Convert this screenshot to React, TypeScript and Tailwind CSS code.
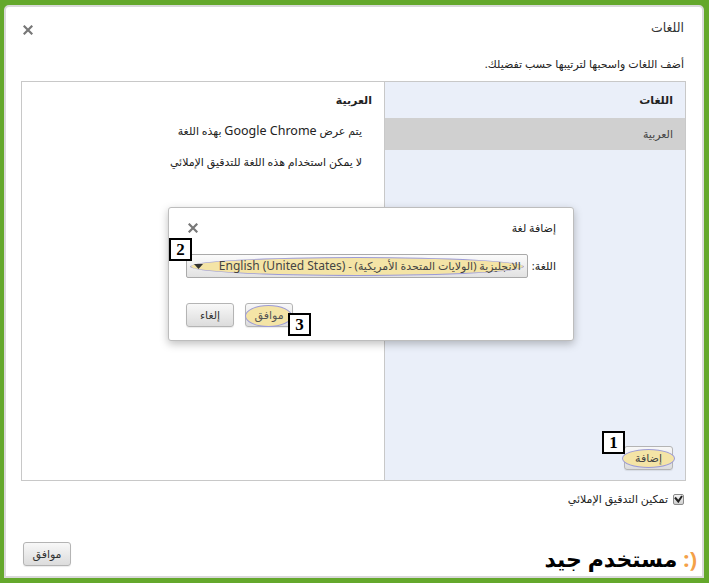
import React from "react";

const BTN =
  "relative flex h-[24px] w-[48px] items-center justify-center rounded-[3px] border border-[#b4b4b4] bg-gradient-to-b from-[#f8f8f8] to-[#dcdcdc] text-[11px] text-[#333] shadow-[0_1px_1px_rgba(0,0,0,0.08)]";

function Highlight({ className }: { className: string }) {
  return (
    <div
      className={
        "pointer-events-none absolute rounded-[50%] border border-[#9c9bd6] bg-[#f4e4a6] " +
        className
      }
    />
  );
}

function Marker({ n, className }: { n: string; className: string }) {
  return (
    <div
      className={
        "absolute z-20 flex h-[23px] w-[23px] items-center justify-center border-2 border-black bg-white font-['Liberation_Serif',serif] text-[17px] font-bold leading-none text-black " +
        className
      }
    >
      {n}
    </div>
  );
}

function CloseX({ className }: { className?: string }) {
  return (
    <svg width="10" height="10" viewBox="0 0 10 10" className={className}>
      <path d="M1.5 1.5 L8.5 8.5 M8.5 1.5 L1.5 8.5" stroke="#777" strokeWidth="2.2" strokeLinecap="square" />
    </svg>
  );
}

export default function App() {
  return (
    <div className="relative h-[583px] w-[709px] overflow-hidden bg-[#64a82c] pb-[5px] pl-[4px] pr-[5px] pt-[5px] font-['Noto_Sans','DejaVu_Sans',sans-serif] text-[11px] text-[#222]">
      <div
        dir="rtl"
        className="flex h-full flex-col rounded-t-[5px] border-2 border-[#d9d9d9] bg-white pl-[15px] pr-[16px]"
      >
        {/* header */}
        <div className="flex h-[40px] items-center justify-between pr-[2px] pt-[2px]">
          <div className="text-[12.5px] text-[#333]">اللغات</div>
          <CloseX className="ml-[2px] mt-[4px]" />
        </div>
        <div className="mt-[7px] flex h-[20px] items-center pr-[2px] text-[#222]">
          أضف اللغات واسحبها لترتيبها حسب تفضيلك.
        </div>

        {/* main box */}
        <div className="mt-[7px] flex h-[400px] border border-[#c8c8c8]">
          <div className="flex w-[301px] flex-col border-l border-[#c8c8c8] bg-[#eaeff9]">
            <div className="flex h-[36px] items-center pr-[12px] font-bold">اللغات</div>
            <div className="flex h-[32px] items-center bg-[#d0d0d0] pr-[12px] text-[#444]">العربية</div>
            <div className="mt-auto flex pb-[10px] pr-[12px]">
              <div className={BTN + " h-[23px] w-[49px]"}>
                <Highlight className="-left-[3px] -right-[3px] top-[2px] bottom-[1px]" />
                <span className="relative text-[#444]">إضافة</span>
              </div>
            </div>
          </div>
          <div className="flex flex-1 flex-col pr-[12px]">
            <div className="flex h-[36px] items-center font-bold">العربية</div>
            <div className="mt-[3px] pr-[10px] leading-[20px]">
              يتم عرض <span className="text-[12.5px]">Google Chrome</span> بهذه اللغة
            </div>
            <div className="mt-[11px] pr-[10px] leading-[20px]">لا يمكن استخدام هذه اللغة للتدقيق الإملائي</div>
          </div>
        </div>

        {/* spell check */}
        <div className="mt-[10px] flex h-[16px] items-center gap-[5px] pr-[2px]">
          <div className="flex h-[11px] w-[11px] items-center justify-center rounded-[2px] border border-[#8a8a8a] bg-gradient-to-b from-[#f4f4f4] to-[#cfcfcf]">
            <svg width="9" height="8" viewBox="0 0 9 8">
              <path d="M1 2.5 L4.3 6.5 L8 1" fill="none" stroke="#222" strokeWidth="2" />
            </svg>
          </div>
          <span>تمكين التدقيق الإملائي</span>
        </div>

        {/* footer */}
        <div dir="ltr" className="-mr-[11px] mt-[32px] flex items-center justify-between">
          <div className={BTN + " ml-[2px]"}>موافق</div>
          <div className="flex items-center gap-[6px] pt-[8px]">
            <span dir="rtl" className="text-[22px] font-bold leading-none text-black">مستخدم جيد</span>
            <span className="text-[22px] font-bold leading-none text-[#f4a148]">:)</span>
          </div>
        </div>
      </div>

      {/* add language overlay dialog */}
      <div
        dir="rtl"
        className="absolute left-[168px] top-[207px] z-10 flex h-[134px] w-[406px] flex-col rounded-[3px] border border-[#bdbdbd] bg-white pl-[17px] pr-[17px] shadow-[0_3px_8px_rgba(0,0,0,0.25)]"
      >
        <div className="flex h-[40px] items-center justify-between">
          <div className="text-[#222]">إضافة لغة</div>
          <CloseX className="ml-[2px]" />
        </div>
        <div className="mt-[6px] flex h-[24px] items-center gap-[4px]">
          <span>اللغة:</span>
          <div className="relative flex h-[24px] flex-1 items-center rounded-[2px] border border-[#aaa] bg-gradient-to-b from-[#fbfbfb] to-[#e2e2e2] pr-[6px]">
            <Highlight className="left-[3px] right-[3px] top-[2px] bottom-[1px]" />
            <span className="relative flex-1 whitespace-nowrap text-[#444]">
              الانجليزية (الولايات المتحدة الأمريكية) - <span className="text-[12px]">English (United States)</span>
            </span>
            <svg width="9" height="5" viewBox="0 0 9 5" className="relative ml-[7px]">
              <path d="M0 0 L9 0 L4.5 5 Z" fill="#333" />
            </svg>
          </div>
        </div>
        <div className="mt-[25px] flex justify-end gap-[11px]">
          <div className={BTN}>
            <Highlight className="-left-[1px] right-0 top-[1px] -bottom-[1px]" />
            <span className="relative text-[#555]">موافق</span>
          </div>
          <div className={BTN}>إلغاء</div>
        </div>
      </div>

      <Marker n="1" className="left-[602px] top-[431px]" />
      <Marker n="2" className="left-[169px] top-[238px]" />
      <Marker n="3" className="left-[288px] top-[313px]" />
    </div>
  );
}
